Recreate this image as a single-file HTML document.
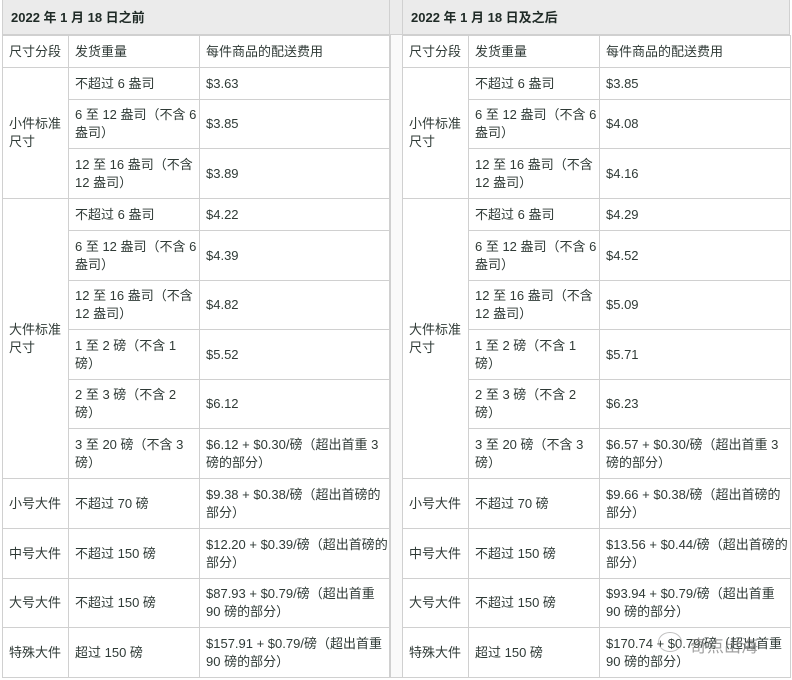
<!DOCTYPE html>
<html><head><meta charset="utf-8"><style>
html,body{margin:0;padding:0;background:#fff;width:792px;height:680px;overflow:hidden}
body{font-family:"Liberation Sans","Noto Sans CJK SC",sans-serif;font-size:13px;color:#2f3a36}
.hdr{position:absolute;top:0;height:35px;background:#ebebeb;border:1px solid #d0d0d0;border-top:none;font-weight:bold;font-size:13px;line-height:35px;box-sizing:border-box;padding-left:8px;color:#1f2a26}
table{position:absolute;top:35px;border-collapse:collapse;table-layout:fixed}
td{border:1px solid #d0d0d0;padding:0 0 0 6px;line-height:18px;vertical-align:middle;box-sizing:border-box;overflow:hidden}
.mid{position:absolute;left:389px;top:35px;width:14px;height:643px;border-left:1px solid #d0d0d0;border-right:1px solid #d0d0d0;border-bottom:1px solid #d0d0d0;box-sizing:border-box;background:#fafafa}
</style></head><body>
<div class="hdr" style="left:2px;width:388px">2022 年 1 月 18 日之前</div>
<div class="hdr" style="left:389px;width:14px;padding:0"></div>
<div class="hdr" style="left:402px;width:388px">2022 年 1 月 18 日及之后</div>
<div class="mid"></div>

<table style="left:2px;width:388px">
<colgroup><col style="width:66px"><col style="width:131px"><col style="width:191px"></colgroup>
<tr style="height:32px"><td>尺寸分段</td><td>发货重量</td><td>每件商品的配送费用</td></tr>
<tr style="height:32px"><td rowspan="3">小件标准尺寸</td><td>不超过 6 盎司</td><td>$3.63</td></tr>
<tr style="height:49px"><td>6 至 12 盎司（不含 6 盎司）</td><td>$3.85</td></tr>
<tr style="height:50px"><td>12 至 16 盎司（不含 12 盎司）</td><td>$3.89</td></tr>
<tr style="height:32px"><td rowspan="6">大件标准尺寸</td><td>不超过 6 盎司</td><td>$4.22</td></tr>
<tr style="height:50px"><td>6 至 12 盎司（不含 6 盎司）</td><td>$4.39</td></tr>
<tr style="height:49px"><td>12 至 16 盎司（不含 12 盎司）</td><td>$4.82</td></tr>
<tr style="height:50px"><td>1 至 2 磅（不含 1 磅）</td><td>$5.52</td></tr>
<tr style="height:49px"><td>2 至 3 磅（不含 2 磅）</td><td>$6.12</td></tr>
<tr style="height:50px"><td>3 至 20 磅（不含 3 磅）</td><td>$6.12 + $0.30/磅（超出首重 3 磅的部分）</td></tr>
<tr style="height:50px"><td>小号大件</td><td>不超过 70 磅</td><td>$9.38 + $0.38/磅（超出首磅的部分）</td></tr>
<tr style="height:50px"><td>中号大件</td><td>不超过 150 磅</td><td>$12.20 + $0.39/磅（超出首磅的部分）</td></tr>
<tr style="height:49px"><td>大号大件</td><td>不超过 150 磅</td><td>$87.93 + $0.79/磅（超出首重 90 磅的部分）</td></tr>
<tr style="height:50px"><td>特殊大件</td><td>超过 150 磅</td><td>$157.91 + $0.79/磅（超出首重 90 磅的部分）</td></tr>
</table>

<table style="left:402px;width:388px">
<colgroup><col style="width:66px"><col style="width:131px"><col style="width:191px"></colgroup>
<tr style="height:32px"><td>尺寸分段</td><td>发货重量</td><td>每件商品的配送费用</td></tr>
<tr style="height:32px"><td rowspan="3">小件标准尺寸</td><td>不超过 6 盎司</td><td>$3.85</td></tr>
<tr style="height:49px"><td>6 至 12 盎司（不含 6 盎司）</td><td>$4.08</td></tr>
<tr style="height:50px"><td>12 至 16 盎司（不含 12 盎司）</td><td>$4.16</td></tr>
<tr style="height:32px"><td rowspan="6">大件标准尺寸</td><td>不超过 6 盎司</td><td>$4.29</td></tr>
<tr style="height:50px"><td>6 至 12 盎司（不含 6 盎司）</td><td>$4.52</td></tr>
<tr style="height:49px"><td>12 至 16 盎司（不含 12 盎司）</td><td>$5.09</td></tr>
<tr style="height:50px"><td>1 至 2 磅（不含 1 磅）</td><td>$5.71</td></tr>
<tr style="height:49px"><td>2 至 3 磅（不含 2 磅）</td><td>$6.23</td></tr>
<tr style="height:50px"><td>3 至 20 磅（不含 3 磅）</td><td>$6.57 + $0.30/磅（超出首重 3 磅的部分）</td></tr>
<tr style="height:50px"><td>小号大件</td><td>不超过 70 磅</td><td>$9.66 + $0.38/磅（超出首磅的部分）</td></tr>
<tr style="height:50px"><td>中号大件</td><td>不超过 150 磅</td><td>$13.56 + $0.44/磅（超出首磅的部分）</td></tr>
<tr style="height:49px"><td>大号大件</td><td>不超过 150 磅</td><td>$93.94 + $0.79/磅（超出首重 90 磅的部分）</td></tr>
<tr style="height:50px"><td>特殊大件</td><td>超过 150 磅</td><td>$170.74 + $0.79/磅（超出首重 90 磅的部分）</td></tr>
</table>
<div style="position:absolute;left:658px;top:632px;width:22px;height:18px;border:1px solid rgba(150,150,150,0.6);border-radius:50%"></div>
<div style="position:absolute;left:690px;top:632px;color:rgba(110,110,110,0.65);font-size:17px">奇点出海</div>
</body></html>
